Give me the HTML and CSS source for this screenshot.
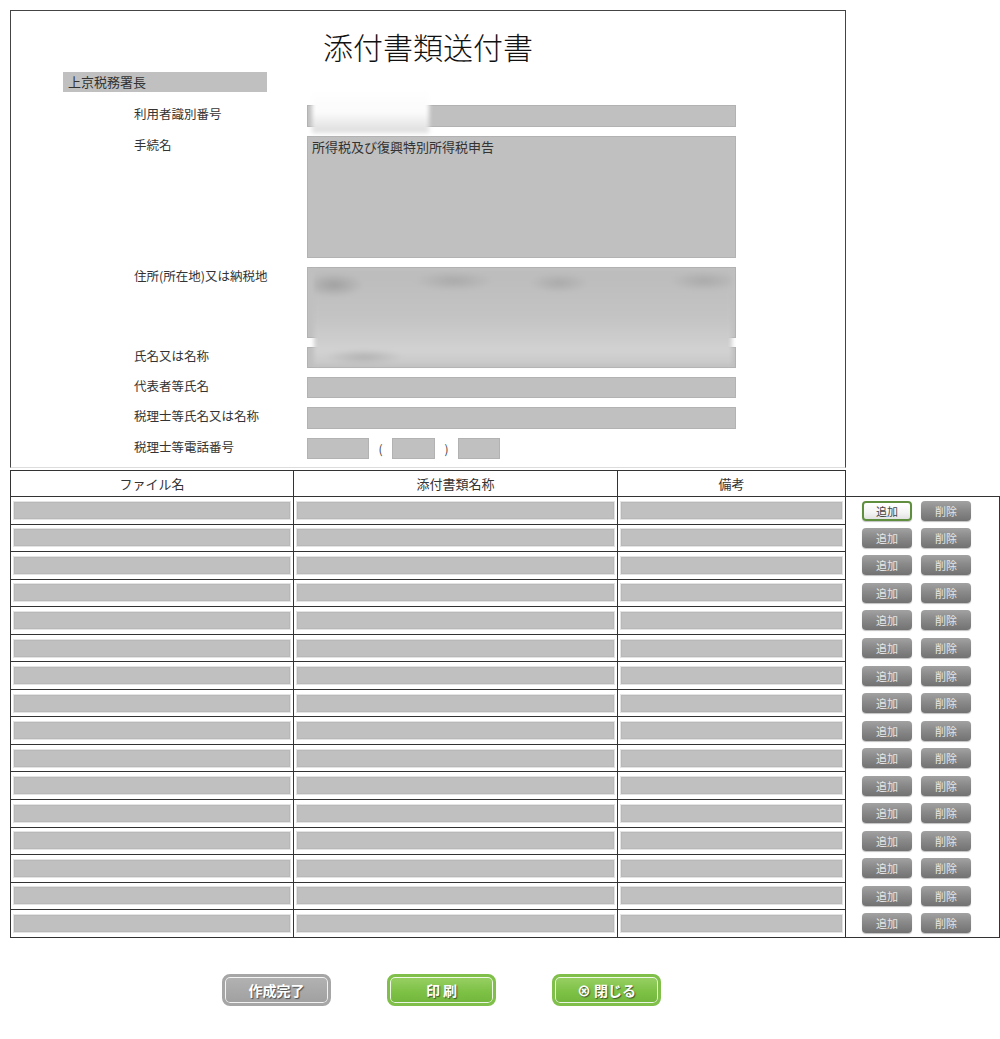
FILE: index.html
```html
<!DOCTYPE html>
<html lang="ja">
<head>
<meta charset="utf-8">
<title>添付書類送付書</title>
<link rel="stylesheet" href="styles.css">
</head>
<body>
<div class="page">
  <div class="panel">
    <h1 class="title">添付書類送付書</h1>
    <div class="office">上京税務署長</div>
    <div class="form">
      <div class="label">利用者識別番号</div>
      <div class="field h22"></div>
      <div class="label">手続名</div>
      <div class="field area1">所得税及び復興特別所得税申告</div>
      <div class="label">住所(所在地)又は納税地</div>
      <div class="field area2"></div>
      <div class="label">氏名又は名称</div>
      <div class="field h21"></div>
      <div class="label">代表者等氏名</div>
      <div class="field h21"></div>
      <div class="label">税理士等氏名又は名称</div>
      <div class="field h22"></div>
      <div class="label">税理士等電話番号</div>
      <div class="phone">
        <div class="field ph1"></div>
        <span class="paren">(</span>
        <div class="field ph2"></div>
        <span class="paren">)</span>
        <div class="field ph3"></div>
      </div>
      <div class="mask mask-id"></div>
      <div class="mask mask-addr"></div>
    </div>
  </div>
  <table class="files">
    <colgroup>
      <col class="c1"><col class="c2"><col class="c3"><col class="c4">
    </colgroup>
    <thead>
      <tr><th>ファイル名</th><th>添付書類名称</th><th>備考</th><th class="blank"></th></tr>
    </thead>
    <tbody>
      <tr class="first"><td><div class="cell"></div></td><td><div class="cell"></div></td><td><div class="cell"></div></td><td class="btns"><span class="sb add active">追加</span><span class="sb">削除</span></td></tr>
      <tr><td><div class="cell"></div></td><td><div class="cell"></div></td><td><div class="cell"></div></td><td class="btns"><span class="sb add">追加</span><span class="sb">削除</span></td></tr>
      <tr><td><div class="cell"></div></td><td><div class="cell"></div></td><td><div class="cell"></div></td><td class="btns"><span class="sb add">追加</span><span class="sb">削除</span></td></tr>
      <tr><td><div class="cell"></div></td><td><div class="cell"></div></td><td><div class="cell"></div></td><td class="btns"><span class="sb add">追加</span><span class="sb">削除</span></td></tr>
      <tr><td><div class="cell"></div></td><td><div class="cell"></div></td><td><div class="cell"></div></td><td class="btns"><span class="sb add">追加</span><span class="sb">削除</span></td></tr>
      <tr><td><div class="cell"></div></td><td><div class="cell"></div></td><td><div class="cell"></div></td><td class="btns"><span class="sb add">追加</span><span class="sb">削除</span></td></tr>
      <tr><td><div class="cell"></div></td><td><div class="cell"></div></td><td><div class="cell"></div></td><td class="btns"><span class="sb add">追加</span><span class="sb">削除</span></td></tr>
      <tr><td><div class="cell"></div></td><td><div class="cell"></div></td><td><div class="cell"></div></td><td class="btns"><span class="sb add">追加</span><span class="sb">削除</span></td></tr>
      <tr><td><div class="cell"></div></td><td><div class="cell"></div></td><td><div class="cell"></div></td><td class="btns"><span class="sb add">追加</span><span class="sb">削除</span></td></tr>
      <tr><td><div class="cell"></div></td><td><div class="cell"></div></td><td><div class="cell"></div></td><td class="btns"><span class="sb add">追加</span><span class="sb">削除</span></td></tr>
      <tr><td><div class="cell"></div></td><td><div class="cell"></div></td><td><div class="cell"></div></td><td class="btns"><span class="sb add">追加</span><span class="sb">削除</span></td></tr>
      <tr><td><div class="cell"></div></td><td><div class="cell"></div></td><td><div class="cell"></div></td><td class="btns"><span class="sb add">追加</span><span class="sb">削除</span></td></tr>
      <tr><td><div class="cell"></div></td><td><div class="cell"></div></td><td><div class="cell"></div></td><td class="btns"><span class="sb add">追加</span><span class="sb">削除</span></td></tr>
      <tr><td><div class="cell"></div></td><td><div class="cell"></div></td><td><div class="cell"></div></td><td class="btns"><span class="sb add">追加</span><span class="sb">削除</span></td></tr>
      <tr><td><div class="cell"></div></td><td><div class="cell"></div></td><td><div class="cell"></div></td><td class="btns"><span class="sb add">追加</span><span class="sb">削除</span></td></tr>
      <tr class="last"><td><div class="cell"></div></td><td><div class="cell"></div></td><td><div class="cell"></div></td><td class="btns"><span class="sb add">追加</span><span class="sb">削除</span></td></tr>
    </tbody>
  </table>
  <div class="actions">
    <span class="big gray">作成完了</span>
    <span class="big green">印 刷</span>
    <span class="big green">&#8855; 閉じる</span>
  </div>
</div>
</body>
</html>
```
FILE: styles.css
```css
* { box-sizing: border-box; }
html, body { margin: 0; padding: 0; background: #fff; }
body {
  font-family: "Noto Sans CJK JP", "Noto Sans", sans-serif;
  color: #333;
  font-size: 13px;
}
.page { padding: 10px 0 0 10px; width: 1000px; }

.panel {
  width: 836px;
  border: 1px solid #444;
  border-bottom: 1px solid #ddd;
  padding: 17px 0 8px 0;
}
.title {
  margin: 0;
  text-align: center;
  font-size: 30px;
  line-height: 36px;
  font-weight: 300;
  color: #111;
  letter-spacing: 0;
}
.office {
  margin: 8px 0 0 52px;
  width: 204px;
  height: 20px;
  background: #c0c0c0;
  font-size: 13px;
  line-height: 20px;
  padding-left: 5px;
  color: #333;
}
.form {
  position: relative;
  margin: 13px 0 0 123px;
  display: grid;
  grid-template-columns: 173px 429px;
  row-gap: 9px;
}
.label {
  font-size: 12.5px;
  line-height: 16px;
  padding-top: 1px;
  color: #333;
}
.field {
  background: #c0c0c0;
  border: 1px solid #b2b2b2;
}
.h22 { height: 22px; }
.h21 { height: 21px; }
.area1 {
  height: 122px;
  font-size: 13px;
  line-height: 18px;
  padding: 1px 4px;
  color: #333;
}
.area2 { height: 71px; }
.phone {
  display: flex;
  align-items: center;
  height: 21px;
}
.phone .field { height: 21px; }
.ph1 { width: 62px; }
.ph2 { width: 43px; }
.ph3 { width: 42px; }
.paren {
  font-size: 12px;
  color: #444;
  width: 23px;
  text-align: center;
}
.mask { position: absolute; pointer-events: none; }
.mask-id {
  left: 178px;
  top: -17px;
  width: 117px;
  height: 45px;
  background: linear-gradient(#fff 0%, #fbfbfb 55%, #dcdcdc 100%);
  filter: blur(2px);
}
.mask-addr {
  left: 180px;
  top: 166px;
  width: 418px;
  height: 94px;
  background:
    radial-gradient(ellipse 30px 12px at 20px 14px, rgba(140,140,140,.6), transparent),
    radial-gradient(ellipse 40px 10px at 140px 10px, rgba(150,150,150,.5), transparent),
    radial-gradient(ellipse 30px 10px at 245px 12px, rgba(150,150,150,.5), transparent),
    radial-gradient(ellipse 35px 10px at 390px 10px, rgba(150,150,150,.5), transparent),
    radial-gradient(ellipse 40px 8px at 50px 86px, rgba(150,150,150,.5), transparent),
    linear-gradient(#bcbcbc 0%, #c4c4c4 50%, #d2d2d2 85%, #c8c8c8 100%);
  filter: blur(2px);
}

.files {
  border-collapse: collapse;
  table-layout: fixed;
  width: 989px;
  margin-top: 2px;
}
.c1 { width: 283px; }
.c2 { width: 324px; }
.c3 { width: 228px; }
.c4 { width: 154px; }
.files th {
  border: 1px solid #333;
  height: 26px;
  font-weight: normal;
  font-size: 13px;
  color: #333;
  padding: 0;
  vertical-align: middle;
}
.files th.blank { border: none; }
.files td {
  border: 1px solid #333;
  height: 27.56px;
  padding: 0 3px;
  vertical-align: middle;
}
.cell {
  height: 17px;
  background: #c0c0c0;
  border: 1px solid #b8b8b8;
  outline: 1px solid #e4e4e4;
}
.files td.btns {
  border-top: none;
  border-bottom: none;
  border-right: 1px solid #333;
  padding: 0 0 0 16px;
  white-space: nowrap;
  font-size: 0;
}
.files tr.first td.btns { border-top: 1px solid #333; }
.files tr.last td.btns { border-bottom: 1px solid #333; }

.sb {
  display: inline-block;
  width: 50px;
  height: 20px;
  margin-right: 9px;
  border-radius: 4px;
  background: linear-gradient(#a2a2a2 0%, #8a8a8a 45%, #727272 100%);
  color: #e6e6e6;
  font-size: 11px;
  line-height: 20px;
  text-align: center;
  vertical-align: middle;
  box-shadow: 0 1px 1px rgba(0,0,0,.25);
}
.sb.active {
  background: linear-gradient(#ffffff 0%, #f4f4f4 60%, #e2e2e2 100%);
  border: 2px solid #5f8f3e;
  color: #444;
  line-height: 16px;
}

.actions {
  display: flex;
  gap: 56px;
  padding-left: 212px;
  margin-top: 36px;
}
.big {
  width: 109px;
  height: 32px;
  border-radius: 8px;
  border: 3px solid;
  box-shadow: inset 0 0 0 1px rgba(255,255,255,.85);
  color: #fff;
  font-weight: bold;
  font-size: 14px;
  line-height: 26px;
  text-align: center;
  text-shadow: 1px 1px 1px rgba(40,40,40,.7);
}
.big.gray {
  border-color: #a6a6a6;
  background: linear-gradient(#b2b2b2, #a0a0a0);
}
.big.green {
  border-color: #7fbf4a;
  background: linear-gradient(#98d064 0%, #7cc044 60%, #73b63d 100%);
}
```
